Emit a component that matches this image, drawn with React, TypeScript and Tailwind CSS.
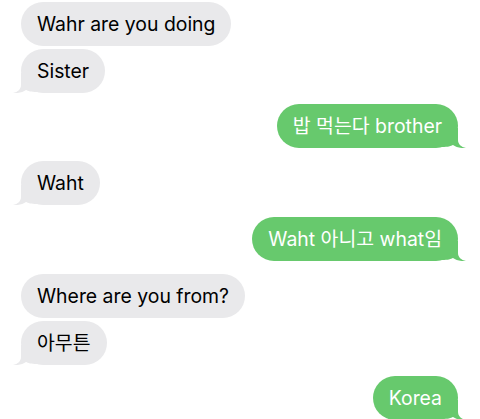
type Msg = { text: string; me: boolean; tail: boolean; mt: string }

const messages: Msg[] = [
  { text: "Wahr are you doing", me: false, tail: false, mt: "mt-[2px]" },
  { text: "Sister", me: false, tail: true, mt: "mt-[3px]" },
  { text: "밥 먹는다 brother", me: true, tail: true, mt: "mt-[11px]" },
  { text: "Waht", me: false, tail: true, mt: "mt-[13px]" },
  { text: "Waht 아니고 what임", me: true, tail: true, mt: "mt-[12px]" },
  { text: "Where are you from?", me: false, tail: false, mt: "mt-[13px]" },
  { text: "아무튼", me: false, tail: true, mt: "mt-[3px]" },
  { text: "Korea", me: true, tail: true, mt: "mt-[11px]" },
]

function Tail({ me }: { me: boolean }) {
  if (me) {
    return (
      <svg className="absolute bottom-0 -right-[8px]" width="24" height="20" viewBox="0 0 24 20">
        <path d="M16 0 L16 12 C16 16 19 19 24 20 C18 20.5 14 19 11 17 C9 18 6 19 0 19 L0 0 Z" fill="#67c96d" />
      </svg>
    )
  }
  return (
    <svg className="absolute bottom-0 -left-[8px]" width="24" height="20" viewBox="0 0 24 20">
      <path d="M8 0 L8 12 C8 16 5 19 0 20 C6 20.5 10 19 13 17 C15 18 18 19 24 19 L24 0 Z" fill="#e9e9eb" />
    </svg>
  )
}

function Bubble({ m }: { m: Msg }) {
  return (
    <div className={`flex ${m.me ? "justify-end pr-[22px]" : "justify-start pl-[21px]"} ${m.mt}`}>
      <div
        className={`relative h-[44px] rounded-[22px] px-4 flex items-center text-[19.4px] leading-6 ${
          m.me ? "bg-[#67c96d] text-white" : "bg-[#e9e9eb] text-black"
        }`}
      >
        {m.tail && <Tail me={m.me} />}
        <span className="relative">{m.text}</span>
      </div>
    </div>
  )
}

export default function App() {
  return (
    <div
      className="w-[480px] h-[419px] overflow-hidden bg-white flex flex-col"
      style={{ fontFamily: 'Inter, "Noto Sans CJK KR", sans-serif' }}
    >
      {messages.map((m, i) => (
        <Bubble key={i} m={m} />
      ))}
    </div>
  )
}
